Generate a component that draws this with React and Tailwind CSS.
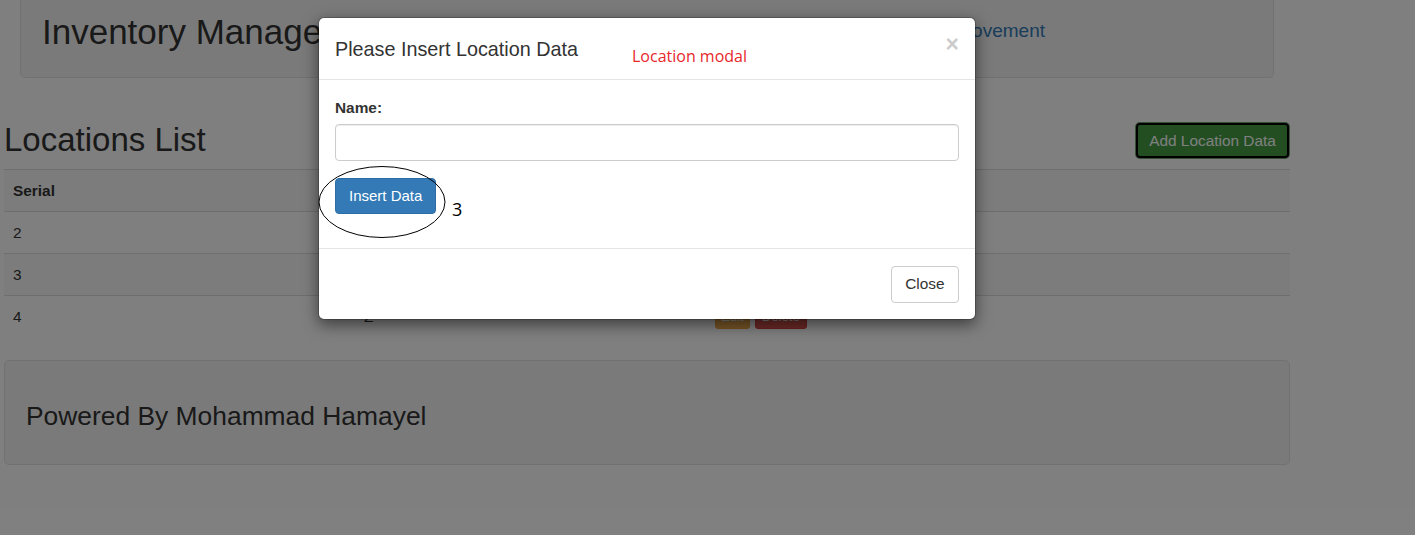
const rows = [
  { serial: 2, name: 'Ramallah' },
  { serial: 3, name: 'Nablus' },
  { serial: 4, name: 'Z' },
];

function ActionButtons() {
  return (
    <div className="flex gap-[5px]">
      <button className="h-[24px] rounded-[3px] border border-[#eea236] bg-[#f0ad4e] px-[5px] text-[13.2px] leading-none text-white">
        Edit
      </button>
      <button className="h-[24px] rounded-[3px] border border-[#d43f3a] bg-[#d9534f] px-[6px] text-[13.2px] leading-none text-white">
        Delete
      </button>
    </div>
  );
}

export default function App() {
  return (
    <div className="relative h-[535px] w-full overflow-hidden bg-white font-['Liberation_Sans',Arial,sans-serif] text-[15.4px] text-[#333]">
      {/* header well */}
      <div className="ml-[20px] flex h-[78px] w-[1254px] items-start rounded-b-[5px] border-x border-b border-[#e3e3e3] bg-[#f5f5f5] pl-[21px] pr-[228px]">
        <h1 className="mt-[14px] text-[35px] leading-none">Inventory Management</h1>
        <nav className="ml-auto mt-[21px] flex gap-[24px] text-[19px] leading-none text-[#337ab7]">
          <a>Locations</a>
          <a>Items</a>
          <a>Stock Movement</a>
        </nav>
      </div>

      {/* list title */}
      <div className="ml-[4px] mt-[45px] flex w-[1286px] items-start justify-between">
        <h1 className="text-[33px] leading-none">Locations List</h1>
        <button className="mr-[1px] h-[35px] w-[153px] rounded-[4px] border-2 border-black bg-[#449d44] text-[15.4px] text-white ring-1 ring-[#6f9f6f]">
          Add Location Data
        </button>
      </div>

      <table className="ml-[4px] mt-[11px] w-[1286px] table-fixed border-collapse text-left">
        <colgroup>
          <col className="w-[351px]" />
          <col className="w-[351px]" />
          <col />
        </colgroup>
        <tbody>
          <tr className="h-[42px] bg-[#f9f9f9]">
            <th className="border-t border-[#ddd] px-[9px] align-middle font-bold">Serial</th>
            <th className="border-t border-[#ddd] px-[9px] align-middle font-bold">Name</th>
            <th className="border-t border-[#ddd] px-[9px] align-middle font-bold">Actions</th>
          </tr>
          {rows.map((r, i) => (
            <tr key={r.serial} className={i % 2 === 1 ? 'h-[42px] bg-[#f9f9f9]' : 'h-[42px]'}>
              <td className="border-t border-[#ddd] px-[9px] align-middle">{r.serial}</td>
              <td className="border-t border-[#ddd] px-[9px] align-middle">{r.name}</td>
              <td className="border-t border-[#ddd] px-[9px] align-middle">
                <ActionButtons />
              </td>
            </tr>
          ))}
        </tbody>
      </table>

      {/* footer well */}
      <div className="ml-[4px] mt-[22px] h-[105px] w-[1286px] rounded-[5px] border border-[#e3e3e3] bg-[#f5f5f5] pl-[21px] pt-[41px]">
        <h3 className="text-[26.4px] leading-[29px]">Powered By Mohammad Hamayel</h3>
      </div>

      {/* backdrop */}
      <div className="absolute inset-0 bg-black/50" />

      {/* modal */}
      <div className="absolute left-[318px] top-[17px] w-[658px] rounded-[6px] border border-black/20 bg-white bg-clip-padding shadow-[0_5px_15px_rgba(0,0,0,0.5)]">
        <div className="flex h-[62px] items-center justify-between border-b border-[#e5e5e5] px-[16px]">
          <h4 className="text-[19.8px] leading-[28px]">Please Insert Location Data</h4>
          <button className="-mt-[9px] text-[23px] font-bold leading-none text-black opacity-20">×</button>
        </div>
        <div className="h-[168px] px-[16px] pt-[16.5px]">
          <label className="mb-[5.5px] block font-bold leading-[22px]">Name:</label>
          <input
            type="text"
            className="block h-[37.4px] w-full rounded-[4px] border border-[#ccc] px-[13px] shadow-[inset_0_1px_1px_rgba(0,0,0,0.075)] outline-none"
          />
          <button className="mt-[16.5px] h-[36px] rounded-[4px] border border-[#2e6da4] bg-[#337ab7] px-[13px] text-[15px] text-white">
            Insert Data
          </button>
        </div>
        <div className="flex justify-end border-t border-[#e5e5e5] p-[16.5px]">
          <button className="h-[37px] rounded-[4px] border border-[#ccc] bg-white px-[13px]">Close</button>
        </div>
      </div>

      {/* screenshot annotations */}
      <span className="absolute left-[632px] top-[48px] font-['Open_Sans',sans-serif] text-[16px] leading-none text-[#e8272b]">
        Location modal
      </span>
      <svg className="absolute left-[318px] top-[165px]" width="130" height="74" viewBox="0 0 130 74">
        <ellipse cx="64" cy="37" rx="63" ry="35.5" fill="none" stroke="#000" strokeWidth="1" />
      </svg>
      <span className="absolute left-[452px] top-[200px] font-['Open_Sans',sans-serif] text-[18px] leading-none text-black">3</span>
    </div>
  );
}
